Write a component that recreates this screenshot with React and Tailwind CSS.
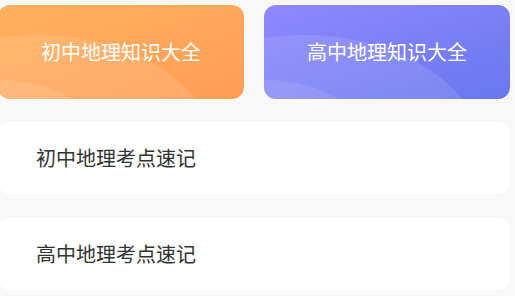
import React from 'react';

const CARDS = [
  { title: '初中地理知识大全', bg: 'bg-[linear-gradient(160deg,#ffb15f_0%,#ff9d55_100%)]' },
  { title: '高中地理知识大全', bg: 'bg-[linear-gradient(160deg,#8f89ff_0%,#6877ee_100%)]' },
];

const ROWS = ['初中地理考点速记', '高中地理考点速记'];

// soft lighter arcs in the lower-left corner of each card
const Waves = () => (
  <svg className="absolute inset-0 w-full h-full" viewBox="0 0 246 94" preserveAspectRatio="none">
    <ellipse cx="40" cy="152" rx="180" ry="122" fill="#ffffff" fillOpacity="0.11" />
    <ellipse cx="0" cy="125" rx="95" ry="50" fill="#ffffff" fillOpacity="0.1" />
  </svg>
);

export default function App() {
  return (
    <div
      className="min-h-[296px] bg-[#f8f8f9] pt-[5px] overflow-hidden"
      style={{ fontFamily: '"Noto Sans CJK SC", "Noto Sans", sans-serif' }}
    >
      <div className="ml-[-2px] w-[512px] flex flex-col">
        <div className="flex gap-[20px]">
          {CARDS.map((c) => (
            <div
              key={c.title}
              className={`relative flex-1 h-[94px] rounded-[12px] overflow-hidden flex items-center justify-center ${c.bg}`}
            >
              <Waves />
              <span className="relative text-white text-[20px] leading-none">{c.title}</span>
            </div>
          ))}
        </div>
        <div className="mt-[23px] flex flex-col gap-[24px]">
          {ROWS.map((r) => (
            <div key={r} className="h-[72px] bg-white rounded-[12px] flex items-center pl-[38px]">
              <span className="text-[#333333] text-[20px] leading-none">{r}</span>
            </div>
          ))}
        </div>
      </div>
    </div>
  );
}
